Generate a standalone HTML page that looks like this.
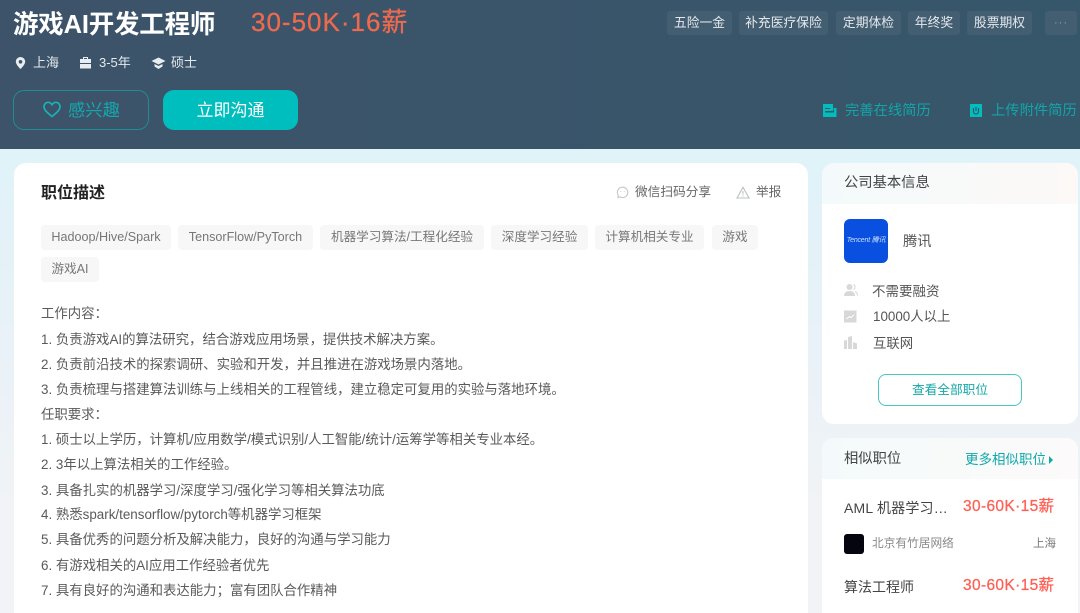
<!DOCTYPE html>
<html lang="zh">
<head>
<meta charset="utf-8">
<title>游戏AI开发工程师</title>
<style>
*{margin:0;padding:0;box-sizing:border-box}
html,body{width:1080px;height:613px;overflow:hidden}
body{position:relative;font-family:"Liberation Sans","Noto Sans CJK SC",sans-serif;background:linear-gradient(180deg,#dff3f8 148px,#e6f2f8 300px,#f2f3f6 520px,#f2f3f6 613px);color:#555}
.a{position:absolute;white-space:nowrap}
.hd{position:absolute;left:0;top:0;width:1080px;height:149px;background:linear-gradient(90deg,#3d5369,#36566a)}
.ben{position:absolute;top:11px;height:24px;line-height:24px;text-align:center;font-size:12.800px;color:#e4e9ed;background:#435d71;border-radius:3px}
.card{position:absolute;background:#fff;border-radius:12px;overflow:hidden}
.tag{position:absolute;height:25px;line-height:25px;text-align:center;font-size:12.600px;color:#777;background:#f7f7f7;border-radius:4px}
.ln{position:absolute;left:41px;font-size:13.400px;line-height:20px;color:#5a5a5a;white-space:nowrap}
.pay{font-size:15.500px;color:#fe6156;letter-spacing:.35px;-webkit-text-stroke:.3px #fe6156}
</style>
</head>
<body>
<div class="hd"></div>

<div class="a" style="left:13px;top:9px;font-size:25.500px;line-height:32px;font-weight:700;color:#fff;letter-spacing:-.2px">游戏AI开发工程师</div>
<div class="a" style="left:251px;top:5px;font-size:26px;line-height:34px;color:#ee6a4f;letter-spacing:1px;-webkit-text-stroke:.3px #ee6a4f">30-50K·16薪</div>

<svg class="a" style="left:14px;top:56px" width="13" height="14" viewBox="0 0 13 14"><path fill="#e8edf0" fill-rule="evenodd" d="M6.500 1a4.700 4.700 0 0 0-4.700 4.700c0 3 4.700 7.300 4.700 7.300s4.700-4.300 4.700-7.300A4.700 4.700 0 0 0 6.500 1zm0 3a1.800 1.800 0 1 1 0 3.600 1.800 1.800 0 0 1 0-3.600z"/></svg>
<div class="a" style="left:33px;top:53px;font-size:13px;line-height:20px;color:#e4e9ed">上海</div>
<svg class="a" style="left:79px;top:56px" width="13" height="14" viewBox="0 0 13 14"><path fill="#e8edf0" d="M4 1h5v2H8V2H5v1H4zM1 3h11v4H1zM1 8h11v4.500H1z"/></svg>
<div class="a" style="left:99px;top:53px;font-size:13px;line-height:20px;color:#e4e9ed">3-5年</div>
<svg class="a" style="left:151px;top:56px" width="15" height="14" viewBox="0 0 15 14"><path fill="#e8edf0" d="M7.500 1.500 14.500 5l-7 3.500L.5 5zM3.500 8l4 2 4-2v2.500L7.500 13l-4-2.500z"/></svg>
<div class="a" style="left:171px;top:53px;font-size:13px;line-height:20px;color:#e4e9ed">硕士</div>

<div class="a" style="left:13px;top:90px;width:136px;height:40px;border:1px solid #1f8c98;border-radius:11px"></div>
<svg class="a" style="left:42px;top:100px" width="20" height="19" viewBox="0 0 20 19"><path fill="none" stroke="#17b3b5" stroke-width="1.700" d="M10 16.500C5 12.500 2 10 2 6.500 2 4 4 2.300 6 2.300c1.700 0 3.100.9 4 2.400.9-1.500 2.300-2.400 4-2.400 2 0 4 1.700 4 4.200 0 3.500-3 6-8 10z"/></svg>
<div class="a" style="left:68px;top:99px;font-size:17.300px;line-height:22px;color:#14a8ac">感兴趣</div>
<div class="a" style="left:163px;top:90px;width:135px;height:40px;line-height:41px;text-align:center;font-size:17px;color:#fff;background:#00bebd;border-radius:11px">立即沟通</div>

<div class="ben" style="left:667px;width:65px">五险一金</div>
<div class="ben" style="left:739px;width:89px">补充医疗保险</div>
<div class="ben" style="left:836px;width:65px">定期体检</div>
<div class="ben" style="left:908px;width:52px">年终奖</div>
<div class="ben" style="left:967px;width:65px">股票期权</div>
<div class="ben" style="left:1045px;width:32px;color:#8fa2b0;font-size:11px;letter-spacing:1px">···</div>

<svg class="a" style="left:823px;top:103px" width="14" height="15" viewBox="0 0 14 15"><path fill="#00bebd" d="M0 1h10v4h3.500v9H0z"/><path fill="#36566a" d="M2 5h5v1H2zM2 8h9v1.500H2zM10 5.500h.8V8H10z"/></svg>
<div class="a" style="left:845px;top:101px;font-size:14.300px;line-height:20px;color:#12a5a9">完善在线简历</div>
<svg class="a" style="left:969px;top:103px" width="14" height="15" viewBox="0 0 14 15"><path fill="#00bebd" d="M1 1h12v13H1z"/><path fill="none" stroke="#36566a" stroke-width="1.200" d="M4.500 5v3.500a2.500 2.500 0 0 0 5 0V5M7 4v4"/></svg>
<div class="a" style="left:991px;top:101px;font-size:14.300px;line-height:20px;color:#12a5a9">上传附件简历</div>

<div class="card" style="left:14px;top:163px;width:794px;height:470px"></div>
<div class="a" style="left:41px;top:183px;font-size:16px;line-height:22px;font-weight:700;color:#222">职位描述</div>

<svg class="a" style="left:616px;top:186px" width="13" height="13" viewBox="0 0 13 13"><path fill="none" stroke="#c4c8cb" stroke-width="1.100" d="M6.500 1.200a5.200 5.200 0 1 1-2.700 9.600L1.800 11.500l.6-2A5.200 5.200 0 0 1 6.500 1.200z"/><path stroke="#c4c8cb" d="M4.500 5.500h.8M7.800 5.500h.8"/></svg>
<div class="a" style="left:635px;top:182px;font-size:12.700px;line-height:20px;color:#666">微信扫码分享</div>
<svg class="a" style="left:736px;top:186px" width="14" height="13" viewBox="0 0 14 13"><path fill="none" stroke="#bcc0c3" stroke-width="1.100" d="M7 1.300 13 12H1zM7 5v3.500M7 9.500v1"/></svg>
<div class="a" style="left:756px;top:182px;font-size:12.700px;line-height:20px;color:#666">举报</div>

<div class="tag" style="left:41px;top:225px;width:130px">Hadoop/Hive/Spark</div>
<div class="tag" style="left:178px;top:225px;width:135px">TensorFlow/PyTorch</div>
<div class="tag" style="left:320px;top:225px;width:164px">机器学习算法/工程化经验</div>
<div class="tag" style="left:491px;top:225px;width:97px">深度学习经验</div>
<div class="tag" style="left:595px;top:225px;width:109px">计算机相关专业</div>
<div class="tag" style="left:712px;top:225px;width:46px">游戏</div>
<div class="tag" style="left:41px;top:257px;width:58px">游戏AI</div>

<div class="ln" style="top:304px">工作内容：</div>
<div class="ln" style="top:330px">1. 负责游戏AI的算法研究，结合游戏应用场景，提供技术解决方案。</div>
<div class="ln" style="top:355px">2. 负责前沿技术的探索调研、实验和开发，并且推进在游戏场景内落地。</div>
<div class="ln" style="top:380px">3. 负责梳理与搭建算法训练与上线相关的工程管线，建立稳定可复用的实验与落地环境。</div>
<div class="ln" style="top:405px">任职要求：</div>
<div class="ln" style="top:430px">1. 硕士以上学历，计算机/应用数学/模式识别/人工智能/统计/运筹学等相关专业本经。</div>
<div class="ln" style="top:455px">2. 3年以上算法相关的工作经验。</div>
<div class="ln" style="top:481px">3. 具备扎实的机器学习/深度学习/强化学习等相关算法功底</div>
<div class="ln" style="top:505px">4. 熟悉spark/tensorflow/pytorch等机器学习框架</div>
<div class="ln" style="top:530px">5. 具备优秀的问题分析及解决能力，良好的沟通与学习能力</div>
<div class="ln" style="top:556px">6. 有游戏相关的AI应用工作经验者优先</div>
<div class="ln" style="top:581px">7. 具有良好的沟通和表达能力；富有团队合作精神</div>

<div class="card" style="left:822px;top:163px;width:256px;height:261px">
  <div style="height:41px;background:linear-gradient(90deg,#f4fafb,#fcf9f7)"></div>
</div>
<div class="a" style="left:844px;top:173px;font-size:14.300px;line-height:20px;color:#444">公司基本信息</div>
<div class="a" style="left:844px;top:219px;width:44px;height:44px;background:#0a50e0;border-radius:6px;color:#cfdfff;font-size:7px;line-height:44px;text-align:center;font-style:italic;letter-spacing:-.2px">Tencent 腾讯</div>
<div class="a" style="left:903px;top:232px;font-size:14.300px;line-height:20px;color:#555">腾讯</div>

<svg class="a" style="left:844px;top:283px" width="14" height="14" viewBox="0 0 14 14"><circle cx="5.500" cy="4" r="3" fill="#d8d8d8"/><path fill="#d8d8d8" d="M0 13c0-3.500 2.500-5 5.500-5s5.500 1.500 5.500 5z"/><path fill="none" stroke="#d8d8d8" d="M9.500 1.500c2 .7 2 4 0 5M11 8.500c1.500.5 2.500 2 2.500 4"/></svg>
<div class="a" style="left:872px;top:282px;font-size:13.500px;line-height:20px;color:#555">不需要融资</div>
<svg class="a" style="left:844px;top:310px" width="13" height="13" viewBox="0 0 13 13"><rect width="12.500" height="12" y=".5" fill="#d8d8d8"/><path fill="none" stroke="#fff" d="M2.500 9 5.500 6.500l1.500 1.200 3-3"/></svg>
<div class="a" style="left:873px;top:307px;font-size:13.400px;line-height:20px;color:#555">10000人以上</div>
<svg class="a" style="left:844px;top:336px" width="14" height="13" viewBox="0 0 14 13"><path fill="#d8d8d8" d="M0 4.500 3 4v9H0zM4 1l4-1v13H4zM9 6l4 1.500V13H9z"/></svg>
<div class="a" style="left:873px;top:334px;font-size:13.400px;line-height:20px;color:#555">互联网</div>
<div class="a" style="left:878px;top:374px;width:144px;height:32px;line-height:30px;text-align:center;border:1px solid #47c6c2;border-radius:8px;font-size:12.700px;color:#15a7a7">查看全部职位</div>

<div class="card" style="left:822px;top:438px;width:256px;height:200px">
  <div style="height:41px;background:linear-gradient(90deg,#f4fafb,#fcfafa)"></div>
</div>
<div class="a" style="left:844px;top:449px;font-size:14.300px;line-height:20px;color:#444">相似职位</div>
<div class="a" style="left:965px;top:450px;font-size:13.500px;line-height:20px;color:#12a9a9">更多相似职位</div>
<svg class="a" style="left:1048px;top:456px" width="6" height="8" viewBox="0 0 6 8"><path fill="#12a9a9" d="M1 0l4 4-4 4z"/></svg>

<div class="a" style="left:844px;top:498px;font-size:14px;line-height:20px;color:#444;letter-spacing:.2px">AML 机器学习…</div>
<div class="a pay" style="left:963px;top:496px;line-height:21px">30-60K·15薪</div>
<div class="a" style="left:844px;top:534px;width:20px;height:20px;background:#050510;border-radius:3px"></div>
<div class="a" style="left:872px;top:534px;font-size:11.700px;line-height:20px;color:#888">北京有竹居网络</div>
<div class="a" style="left:1033px;top:534px;font-size:11.500px;line-height:20px;color:#777">上海</div>
<div class="a" style="left:844px;top:577px;font-size:14px;line-height:20px;color:#444">算法工程师</div>
<div class="a pay" style="left:963px;top:575px;line-height:21px">30-60K·15薪</div>
</body>
</html>
